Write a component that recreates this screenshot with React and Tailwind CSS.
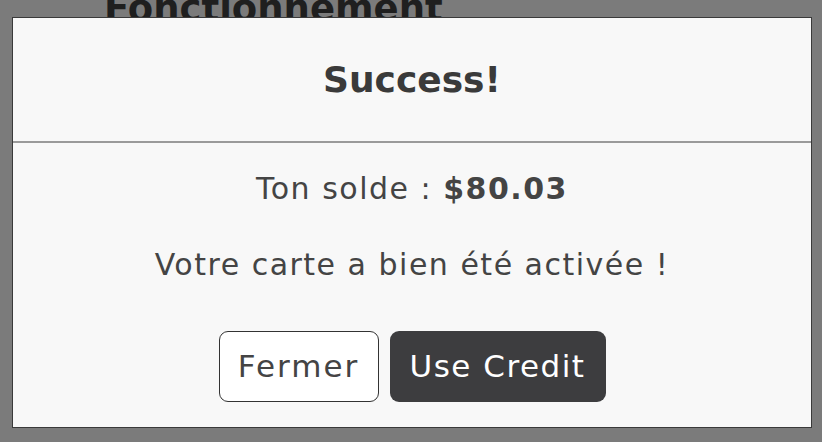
export default function App() {
  return (
    <div className="relative h-[442px] w-[822px] overflow-hidden bg-[#7b7b7b] font-['DejaVu_Sans',sans-serif]">
      {/* page behind the backdrop */}
      <h1 className="ml-[104px] mt-[-10px] text-[37px] font-bold leading-none text-[#1f1f1f]">
        Fonctionnement
      </h1>

      {/* modal */}
      <div className="absolute left-[12px] top-[17px] flex h-[411px] w-[800px] flex-col border border-[#3a3a3a] bg-[#f8f8f8]">
        <div className="flex h-[125px] items-center justify-center border-b-2 border-[#9a9a9a]">
          <h2 className="text-[36px] font-bold text-[#3a3a3a]">Success!</h2>
        </div>
        <div className="flex flex-1 flex-col items-center pt-[26px] tracking-[1.5px] text-[#444]">
          <p className="text-[30px] leading-[40px]">
            Ton solde : <span className="font-bold">$80.03</span>
          </p>
          <p className="mt-[36px] text-[30px] leading-[40px]">Votre carte a bien été activée !</p>
          <div className="mt-[46px] flex gap-[11px]">
            <button className="h-[71px] w-[160px] rounded-[9px] border border-[#333] bg-white text-[31px] tracking-[2px] text-[#444]">
              Fermer
            </button>
            <button className="h-[71px] w-[216px] rounded-[9px] bg-[#3d3d3f] text-[31px] tracking-[1.5px] text-white">
              Use Credit
            </button>
          </div>
        </div>
      </div>
    </div>
  );
}
